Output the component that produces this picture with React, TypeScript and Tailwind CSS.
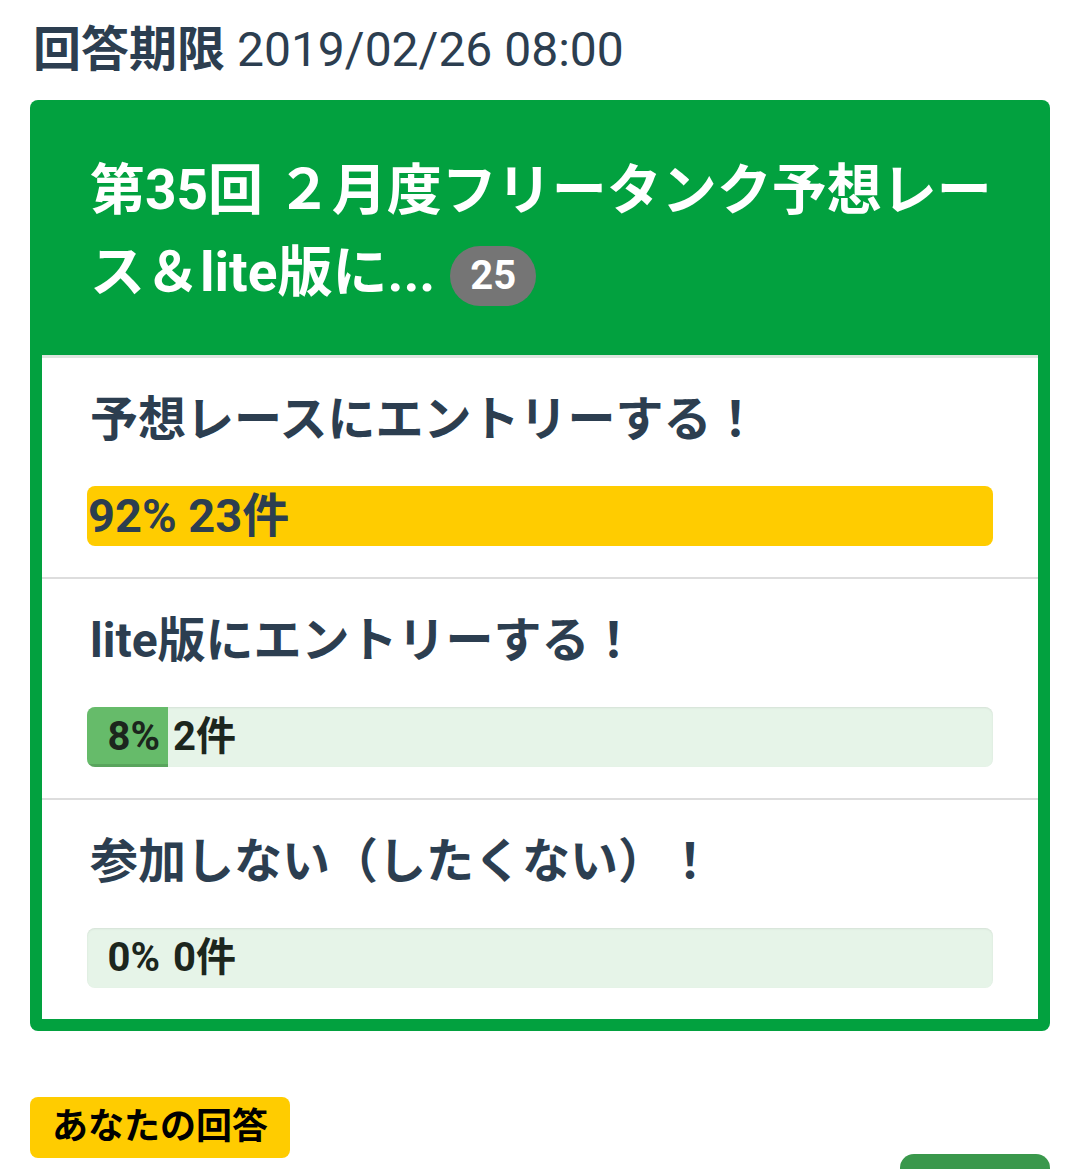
const font = { fontFamily: "Roboto, 'Noto Sans CJK JP', sans-serif" };

const Choice = ({ label, children, last }: { label: string; children: React.ReactNode; last?: boolean }) => {
    return (
        <div className={`px-[45px] pt-[32px] pb-[31px] ${last ? "" : "border-b-2 border-[#dddddd]"}`}>
            <div className="pl-[3px] text-[48px] leading-[60px] font-bold text-[#2c3e50] whitespace-nowrap">{label}</div>
            <div className="mt-[36px]">{children}</div>
        </div>
    );
};

const App = () => {
    return (
        <div style={font} className="h-[1169px] overflow-hidden bg-white px-[30px] pt-[20px]">
            {/* deadline */}
            <div className="pl-[3px] text-[48px] leading-[60px] text-[#2c3e50] whitespace-nowrap">
                <span className="font-bold">回答期限</span> 2019/02/26 08:00
            </div>

            {/* poll card */}
            <div className="mt-[20px] rounded-[8px] bg-[#02a13f] px-[12px] pb-[12px]">
                <div className="pt-[49px] pb-[42px] pl-[48px] pr-[36px]">
                    <div className="text-[55px] leading-[82px] font-bold text-white">
                        第35回 ２月度フリータンク予想レース＆lite版に...
                        <span className="ml-[15px] inline-flex h-[60px] items-center rounded-full bg-[#757575] px-[20px] align-middle text-[40px] leading-none">
                            25
                        </span>
                    </div>
                </div>
                <div className="bg-white border-t-[3px] border-[#dde6df]">
                    <Choice label="予想レースにエントリーする！">
                        <div className="flex h-[60px] items-center rounded-[8px] bg-[#ffcc00] pl-[1px] text-[47px] font-bold text-[#2c3e50]">
                            92% 23件
                        </div>
                    </Choice>
                    <Choice label="lite版にエントリーする！">
                        <div className="flex h-[60px] items-center overflow-hidden rounded-[8px] bg-[#e6f4e8] text-[40px] font-bold text-[#1c261d] shadow-[inset_0_1px_2px_rgba(0,0,0,0.08)]">
                            <span className="flex h-full w-[81px] items-center justify-end bg-[#66bb6a] pr-[8px] shadow-[inset_0_-3px_0_rgba(0,0,0,0.12)]">8%</span>
                            <span className="ml-[5px]">2件</span>
                        </div>
                    </Choice>
                    <Choice label="参加しない（したくない）！" last>
                        <div className="flex h-[60px] items-center rounded-[8px] bg-[#e6f4e8] text-[40px] font-bold text-[#1c261d] shadow-[inset_0_1px_2px_rgba(0,0,0,0.08)]">
                            <span className="w-[81px] pr-[8px] text-right">0%</span>
                            <span className="ml-[5px]">0件</span>
                        </div>
                    </Choice>
                </div>
            </div>

            {/* your answer */}
            <div className="mt-[66px]">
                <span className="inline-block rounded-[8px] bg-[#ffcc00] px-[22px] text-[36px] leading-[61px] font-bold text-black">
                    あなたの回答
                </span>
            </div>
            <div className="-mt-[4px] flex justify-end">
                <div className="h-[60px] w-[150px] rounded-t-[14px] bg-[#3a984c]" />
            </div>
        </div>
    );
};

export default App;
